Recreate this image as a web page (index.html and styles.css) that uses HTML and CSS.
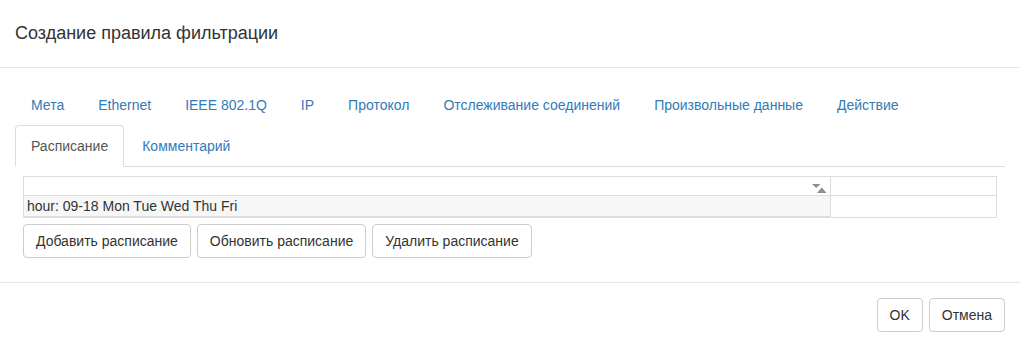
FILE: index.html
```html
<!DOCTYPE html>
<html lang="ru">
<head>
    <meta charset="UTF-8">
    <title>Создание правила фильтрации</title>
    <link rel="stylesheet" href="styles.css">
</head>
<body>
    <div class="modal">
        <div class="modal-header">
            <h4 class="modal-title">Создание правила фильтрации</h4>
        </div>
        <div class="modal-body">
            <ul class="nav-tabs">
                <li><a href="#">Мета</a></li>
                <li><a href="#">Ethernet</a></li>
                <li><a href="#">IEEE 802.1Q</a></li>
                <li><a href="#">IP</a></li>
                <li><a href="#">Протокол</a></li>
                <li><a href="#">Отслеживание соединений</a></li>
                <li><a href="#">Произвольные данные</a></li>
                <li><a href="#">Действие</a></li>
                <li class="active"><a href="#">Расписание</a></li>
                <li><a href="#">Комментарий</a></li>
            </ul>
            <div class="tab-pane">
                <div class="grid">
                    <div class="cell head sortable">
                        <svg class="sort-icon" width="15" height="9" viewBox="0 0 15 9">
                            <polygon points="0,0 8.5,0 4.25,4" fill="#8e8e8e"/>
                            <polygon points="5,9 14.5,9 9.75,3.5" fill="#8e8e8e"/>
                        </svg>
                    </div>
                    <div class="cell head"></div>
                    <div class="cell row selected">hour: 09-18 Mon Tue Wed Thu Fri</div>
                    <div class="cell row"></div>
                </div>
                <div class="btn-row">
                    <button class="btn">Добавить расписание</button>
                    <button class="btn">Обновить расписание</button>
                    <button class="btn">Удалить расписание</button>
                </div>
            </div>
        </div>
        <div class="modal-footer">
            <button class="btn">OK</button>
            <button class="btn">Отмена</button>
        </div>
    </div>
</body>
</html>
```

FILE: styles.css
```css
html, body {
    margin: 0;
    overflow: hidden;
}
body {
    font-family: "Liberation Sans", Arial, sans-serif;
    font-size: 14px;
    line-height: 20px;
    color: #333;
    background: #fff;
}
.modal-header {
    height: 68px;
    padding: 0 15px;
    border-bottom: 1px solid #e5e5e5;
    box-sizing: border-box;
    display: flex;
    align-items: center;
}
.modal-title {
    margin: 0;
    font-size: 18px;
    font-weight: normal;
    line-height: 26px;
    padding-bottom: 2px;
}
.modal-body {
    padding: 16px 15px 15px;
}
.nav-tabs {
    list-style: none;
    margin: 0;
    padding: 0;
    display: flex;
    flex-wrap: wrap;
    border-bottom: 1px solid #ddd;
}
.nav-tabs li {
    margin-bottom: -1px;
}
.nav-tabs a {
    display: block;
    margin-right: 2px;
    padding: 10px 15px;
    border: 1px solid transparent;
    border-radius: 4px 4px 0 0;
    color: #337ab7;
    text-decoration: none;
}
.nav-tabs .active a {
    color: #555;
    background: #fff;
    border-color: #ddd #ddd transparent;
}
.tab-pane {
    padding: 9px 8px 9px 8px;
}
.grid {
    display: grid;
    grid-template-columns: 1fr 166px;
    border-top: 1px solid #ddd;
    border-left: 1px solid #ddd;
}
.cell {
    border-right: 1px solid #ddd;
    border-bottom: 1px solid #ddd;
}
.head {
    height: 18px;
}
.row {
    height: 21px;
    line-height: 20px;
    padding-left: 3px;
}
.sortable {
    display: flex;
    justify-content: flex-end;
    align-items: flex-end;
    padding: 0 3px 2px 0;
    height: 16px;
}
.sort-icon {
    display: block;
}
.selected {
    background: #f7f7f7;
    box-shadow: inset 0 -1px 0 #ddd;
}
.btn-row {
    display: flex;
    gap: 6px;
    margin-top: 6px;
}
.btn {
    font-family: inherit;
    font-size: 14px;
    line-height: 20px;
    color: #333;
    background: #fff;
    border: 1px solid #ccc;
    border-radius: 4px;
    padding: 6px 12px;
    cursor: pointer;
}
.modal-footer {
    border-top: 1px solid #e5e5e5;
    padding: 15px;
    display: flex;
    justify-content: flex-end;
    gap: 6px;
}
```
